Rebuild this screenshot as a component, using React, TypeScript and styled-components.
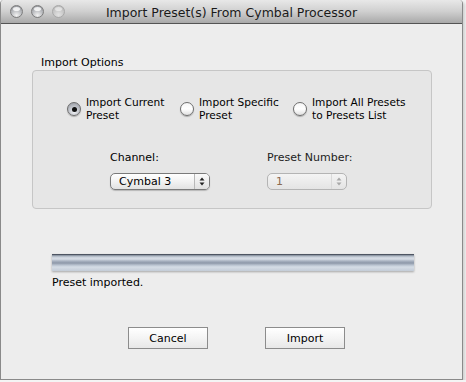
import styled, { createGlobalStyle } from 'styled-components';

const GlobalStyle = createGlobalStyle`
  html, body {
    margin: 0;
    padding: 0;
    background: #f4f4f4;
  }
  body {
    font-family: "DejaVu Sans", "Liberation Sans", sans-serif;
    font-size: 11px;
    color: #000;
  }
`;

const Window = styled.div`
  width: 461px;
  height: 379px;
  border: 1px solid #8a8a8a;
  border-top: none;
  border-radius: 4px 4px 0 0;
  background: #ededed;
  display: flex;
  flex-direction: column;
  box-shadow: 2px 2px 3px rgba(0, 0, 0, 0.15);
  overflow: hidden;
`;

const TitleBar = styled.div`
  height: 23px;
  border-bottom: 1px solid #545454;
  background: linear-gradient(#e8e8e8, #cfcfcf 50%, #a9a9a9);
  display: flex;
  align-items: center;
  position: relative;
  padding-left: 9px;
  gap: 8px;
`;

const Light = styled.div<{ $dim?: boolean }>`
  width: 13px;
  height: 13px;
  border-radius: 50%;
  box-sizing: border-box;
  border: 1px solid ${p => (p.$dim ? '#a8a8a8' : '#7c7c7c')};
  background: ${p =>
    p.$dim
      ? 'radial-gradient(circle at 50% 80%, #e2e2e2, #c4c4c4 60%, #b8b8b8)'
      : 'radial-gradient(circle at 50% 85%, #f2f2f2, #b4b6ba 55%, #8e9096)'};
  position: relative;
  &::after {
    content: '';
    position: absolute;
    left: 2px;
    top: 1px;
    width: 7px;
    height: 4px;
    border-radius: 50%;
    background: rgba(255, 255, 255, ${p => (p.$dim ? 0.5 : 0.8)});
  }
`;

const Title = styled.div`
  position: absolute;
  left: 0;
  right: 0;
  top: 0;
  bottom: 0;
  display: flex;
  align-items: center;
  justify-content: center;
  font-size: 12.5px;
  color: #1a1a1a;
  padding-top: 1px;
`;

const Content = styled.div`
  flex: 1;
  padding: 32px 0 0 31px;
  display: flex;
  flex-direction: column;
`;

const GroupLabel = styled.div`
  padding-left: 9px;
  height: 14px;
  line-height: 14px;
`;

const GroupBox = styled.div`
  margin-top: 0;
  width: 398px;
  height: 137px;
  border: 1px solid #c6c6c6;
  border-radius: 4px;
  background: #e6e6e6;
  box-sizing: content-box;
  display: flex;
  flex-direction: column;
`;

const RadioRow = styled.div`
  display: grid;
  grid-template-columns: 113px 113px 130px;
  padding: 25px 0 0 34px;
`;

const RadioItem = styled.div`
  display: flex;
  align-items: center;
  gap: 5px;
`;

const Radio = styled.div<{ $on?: boolean }>`
  width: 14px;
  height: 14px;
  flex: none;
  border-radius: 50%;
  box-sizing: border-box;
  border: 1px solid #6e6e6e;
  background: ${p =>
    p.$on
      ? 'radial-gradient(circle at 50% 75%, #eef0f4, #b6b9c0 60%, #8e929a)'
      : 'linear-gradient(#f6f6f6, #ffffff 50%, #e0e0e0)'};
  box-shadow: 0 1px 1px rgba(0, 0, 0, 0.25);
  display: flex;
  align-items: center;
  justify-content: center;
  &::after {
    content: '';
    display: ${p => (p.$on ? 'block' : 'none')};
    width: 5px;
    height: 5px;
    border-radius: 50%;
    background: #111;
  }
`;

const RadioText = styled.div`
  line-height: 13px;
  font-size: 10.6px;
`;

const FieldRow = styled.div`
  display: grid;
  grid-template-columns: 157px 100px;
  padding: 29px 0 0 77px;
`;

const Field = styled.div`
  display: flex;
  flex-direction: column;
  gap: 9px;
`;

const FieldLabel = styled.div<{ $dim?: boolean }>`
  line-height: 13px;
  color: ${p => (p.$dim ? '#222' : '#000')};
`;

const Popup = styled.div<{ $w: number; $disabled?: boolean }>`
  width: ${p => p.$w}px;
  height: 17px;
  box-sizing: border-box;
  border: 1px solid ${p => (p.$disabled ? '#b4b4b4' : '#7a7a7a')};
  border-radius: 5px;
  background: ${p =>
    p.$disabled
      ? 'linear-gradient(#f4f4f4, #ececec 50%, #e4e4e4)'
      : 'linear-gradient(#ffffff, #f2f2f2 50%, #e2e2e2)'};
  box-shadow: ${p => (p.$disabled ? 'none' : '0 1px 1px rgba(0,0,0,0.2)')};
  display: flex;
  align-items: center;
`;

const PopupText = styled.div<{ $disabled?: boolean }>`
  flex: 1;
  padding-left: 8px;
  color: ${p => (p.$disabled ? '#8a6a50' : '#000')};
  line-height: 15px;
`;

const Stepper = styled.div<{ $disabled?: boolean }>`
  width: 14px;
  height: 100%;
  border-left: 1px solid ${p => (p.$disabled ? '#dadada' : '#b8b8b8')};
  display: flex;
  align-items: center;
  justify-content: center;
  border-radius: 0 4px 4px 0;
  background: ${p => (p.$disabled ? 'transparent' : 'linear-gradient(#fafafa, #e0e0e0)')};
`;

const Arrows = ({ color }: { color: string }) => (
  <svg width="6" height="9" viewBox="0 0 6 9">
    <path d="M3 0.5 L5.5 3.5 L0.5 3.5 Z" fill={color} />
    <path d="M3 8.5 L5.5 5.5 L0.5 5.5 Z" fill={color} />
  </svg>
);

const Progress = styled.div`
  margin: 45px 0 0 20px;
  width: 362px;
  height: 17px;
  box-sizing: border-box;
  border-top: 1px solid #4e5562;
  background: linear-gradient(
    #7d8795 0px,
    #c9d1db 2px,
    #d8dee6 4px,
    #a9b3c1 6px,
    #8d98a8 8px,
    #b7c1ce 10px,
    #d5dde6 12px,
    #c3ccd7 16px
  );
  box-shadow: 0 1px 2px rgba(0, 0, 0, 0.3);
`;

const Status = styled.div`
  margin: 5px 0 0 20px;
  line-height: 13px;
`;

const ButtonRow = styled.div`
  display: flex;
  gap: 57px;
  padding: 38px 0 0 96px;
`;

const Button = styled.div`
  width: 80px;
  height: 22px;
  box-sizing: border-box;
  border: 1px solid #8c8c8c;
  background: linear-gradient(#ffffff, #f4f4f4 50%, #e8e8e8);
  display: flex;
  align-items: center;
  justify-content: center;
  font-size: 11px;
`;

const App = () => {
  return (
    <>
      <GlobalStyle />
      <Window>
        <TitleBar>
          <Light />
          <Light />
          <Light $dim />
          <Title>Import Preset(s) From Cymbal Processor</Title>
        </TitleBar>
        <Content>
          <GroupLabel>Import Options</GroupLabel>
          <GroupBox>
            <RadioRow>
              <RadioItem>
                <Radio $on />
                <RadioText>
                  Import Current
                  <br />
                  Preset
                </RadioText>
              </RadioItem>
              <RadioItem>
                <Radio />
                <RadioText>
                  Import Specific
                  <br />
                  Preset
                </RadioText>
              </RadioItem>
              <RadioItem>
                <Radio />
                <RadioText>
                  Import All Presets
                  <br />
                  to Presets List
                </RadioText>
              </RadioItem>
            </RadioRow>
            <FieldRow>
              <Field>
                <FieldLabel>Channel:</FieldLabel>
                <Popup $w={100}>
                  <PopupText>Cymbal 3</PopupText>
                  <Stepper>
                    <Arrows color="#222" />
                  </Stepper>
                </Popup>
              </Field>
              <Field>
                <FieldLabel $dim>Preset Number:</FieldLabel>
                <Popup $w={80} $disabled>
                  <PopupText $disabled>1</PopupText>
                  <Stepper $disabled>
                    <Arrows color="#a8a8a8" />
                  </Stepper>
                </Popup>
              </Field>
            </FieldRow>
          </GroupBox>
          <Progress />
          <Status>Preset imported.</Status>
          <ButtonRow>
            <Button>Cancel</Button>
            <Button>Import</Button>
          </ButtonRow>
        </Content>
      </Window>
    </>
  );
};

export default App;
